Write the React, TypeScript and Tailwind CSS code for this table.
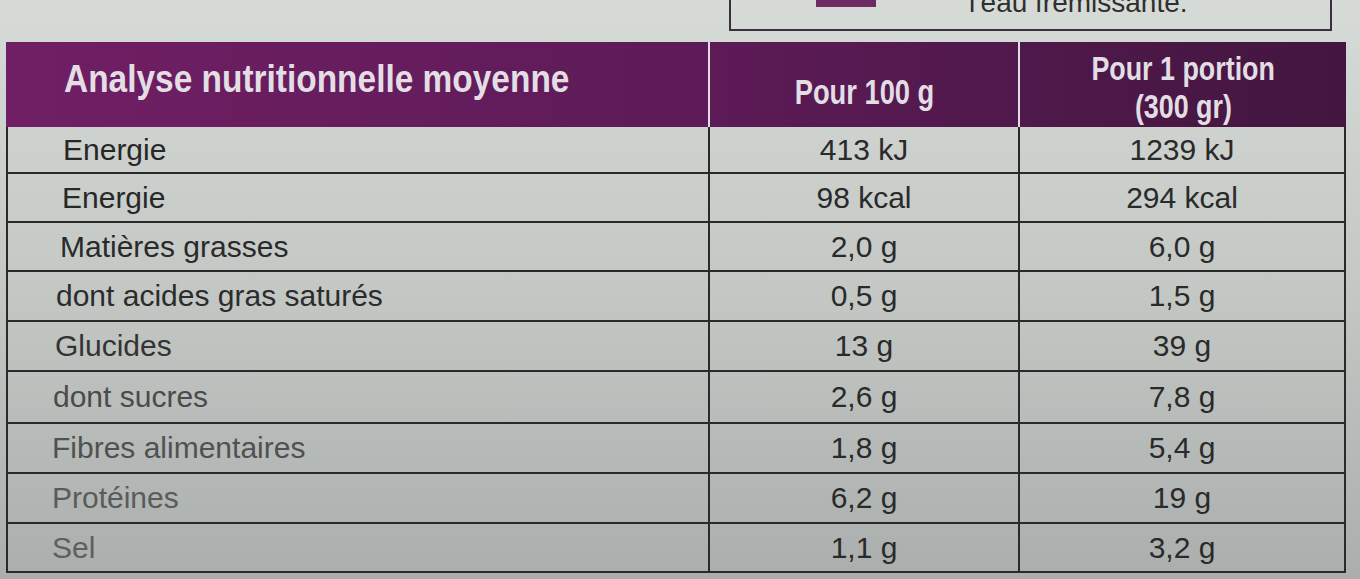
import React from "react";

type Row = {
  label: string;
  a: string;
  b: string;
  h: string;
  pl: string;
  labelColor: string;
};

const rows: Row[] = [
  { label: "Energie", a: "413 kJ", b: "1239 kJ", h: "h-[47px]", pl: "pl-[55px]", labelColor: "text-[#272727]" },
  { label: "Energie", a: "98 kcal", b: "294 kcal", h: "h-[49px]", pl: "pl-[54px]", labelColor: "text-[#282828]" },
  { label: "Matières grasses", a: "2,0 g", b: "6,0 g", h: "h-[49px]", pl: "pl-[52px]", labelColor: "text-[#2a2a2a]" },
  { label: "dont acides gras saturés", a: "0,5 g", b: "1,5 g", h: "h-[50px]", pl: "pl-[48px]", labelColor: "text-[#2c2c2c]" },
  { label: "Glucides", a: "13 g", b: "39 g", h: "h-[50px]", pl: "pl-[47px]", labelColor: "text-[#333333]" },
  { label: "dont sucres", a: "2,6 g", b: "7,8 g", h: "h-[52px]", pl: "pl-[45px]", labelColor: "text-[#4a4b4a]" },
  { label: "Fibres alimentaires", a: "1,8 g", b: "5,4 g", h: "h-[50px]", pl: "pl-[44px]", labelColor: "text-[#505150]" },
  { label: "Protéines", a: "6,2 g", b: "19 g", h: "h-[50px]", pl: "pl-[44px]", labelColor: "text-[#5a5b5a]" },
  { label: "Sel", a: "1,1 g", b: "3,2 g", h: "h-[49px]", pl: "pl-[44px]", labelColor: "text-[#5e5f5e]" },
];

export default function App() {
  return (
    <div className="flex flex-col w-[1360px] h-[579px] overflow-hidden bg-linear-to-b from-[#d6dbd7] via-[#c4c8c5] to-[#aaaeac] font-['Liberation_Sans',Arial,sans-serif]">
      {/* top partial box */}
      <div className="flex flex-col h-[42px] shrink-0">
        <div className="ml-[729px] w-[603px] h-[51px] -mt-[20px] shrink-0 border-2 border-[#3a2f3a] flex items-start pl-[85px]">
          <div className="w-[60px] h-[25px] bg-[#6d2a63]" />
          <div className="ml-[93px] mt-[7px] text-[28px] leading-[28px] text-[#2f2f2f] whitespace-nowrap">
            l'eau frémissante.
          </div>
        </div>
      </div>

      {/* table */}
      <div className="ml-[6px] w-[1340px] shrink-0">
        {/* header */}
        <div className="grid grid-cols-[704px_310px_1fr] h-[85px] bg-linear-to-r from-[#701f64] via-[#5e1b58] to-[#43163f] text-[#e2dee4] font-bold">
          <div className="flex items-center pl-[58px] pb-[12px] border-r-2 border-[#e4dce4]">
            <span className="inline-block origin-left scale-x-[0.88] text-[38px] leading-none whitespace-nowrap">
              Analyse nutritionnelle moyenne
            </span>
          </div>
          <div className="flex items-center justify-center border-r-2 border-[#e4dce4]">
            <span className="inline-block scale-x-[0.78] text-[35px] leading-none whitespace-nowrap pt-[14px]">
              Pour 100 g
            </span>
          </div>
          <div className="flex flex-col items-center justify-center pt-[4px] text-[34px] leading-[38px]">
            <span className="inline-block scale-x-[0.79] whitespace-nowrap">Pour 1 portion</span>
            <span className="inline-block scale-x-[0.79] whitespace-nowrap">(300 gr)</span>
          </div>
        </div>

        {/* body */}
        <div className="border-l-2 border-r-2 border-[#2a2a2a]">
          {rows.map((r, i) => (
            <div
              key={i}
              className={`grid grid-cols-[702px_310px_1fr] border-b-2 border-[#2a2a2a] ${r.h}`}
            >
              <div className={`flex items-center border-r-2 border-[#2a2a2a] text-[30px] leading-none whitespace-nowrap ${r.pl} ${r.labelColor}`}>
                {r.label}
              </div>
              <div className="flex items-center justify-center border-r-2 border-[#2a2a2a] text-[30px] leading-none text-[#2a2a2a] whitespace-nowrap">
                {r.a}
              </div>
              <div className="flex items-center justify-center text-[30px] leading-none text-[#2a2a2a] whitespace-nowrap">
                {r.b}
              </div>
            </div>
          ))}
        </div>
      </div>
    </div>
  );
}
